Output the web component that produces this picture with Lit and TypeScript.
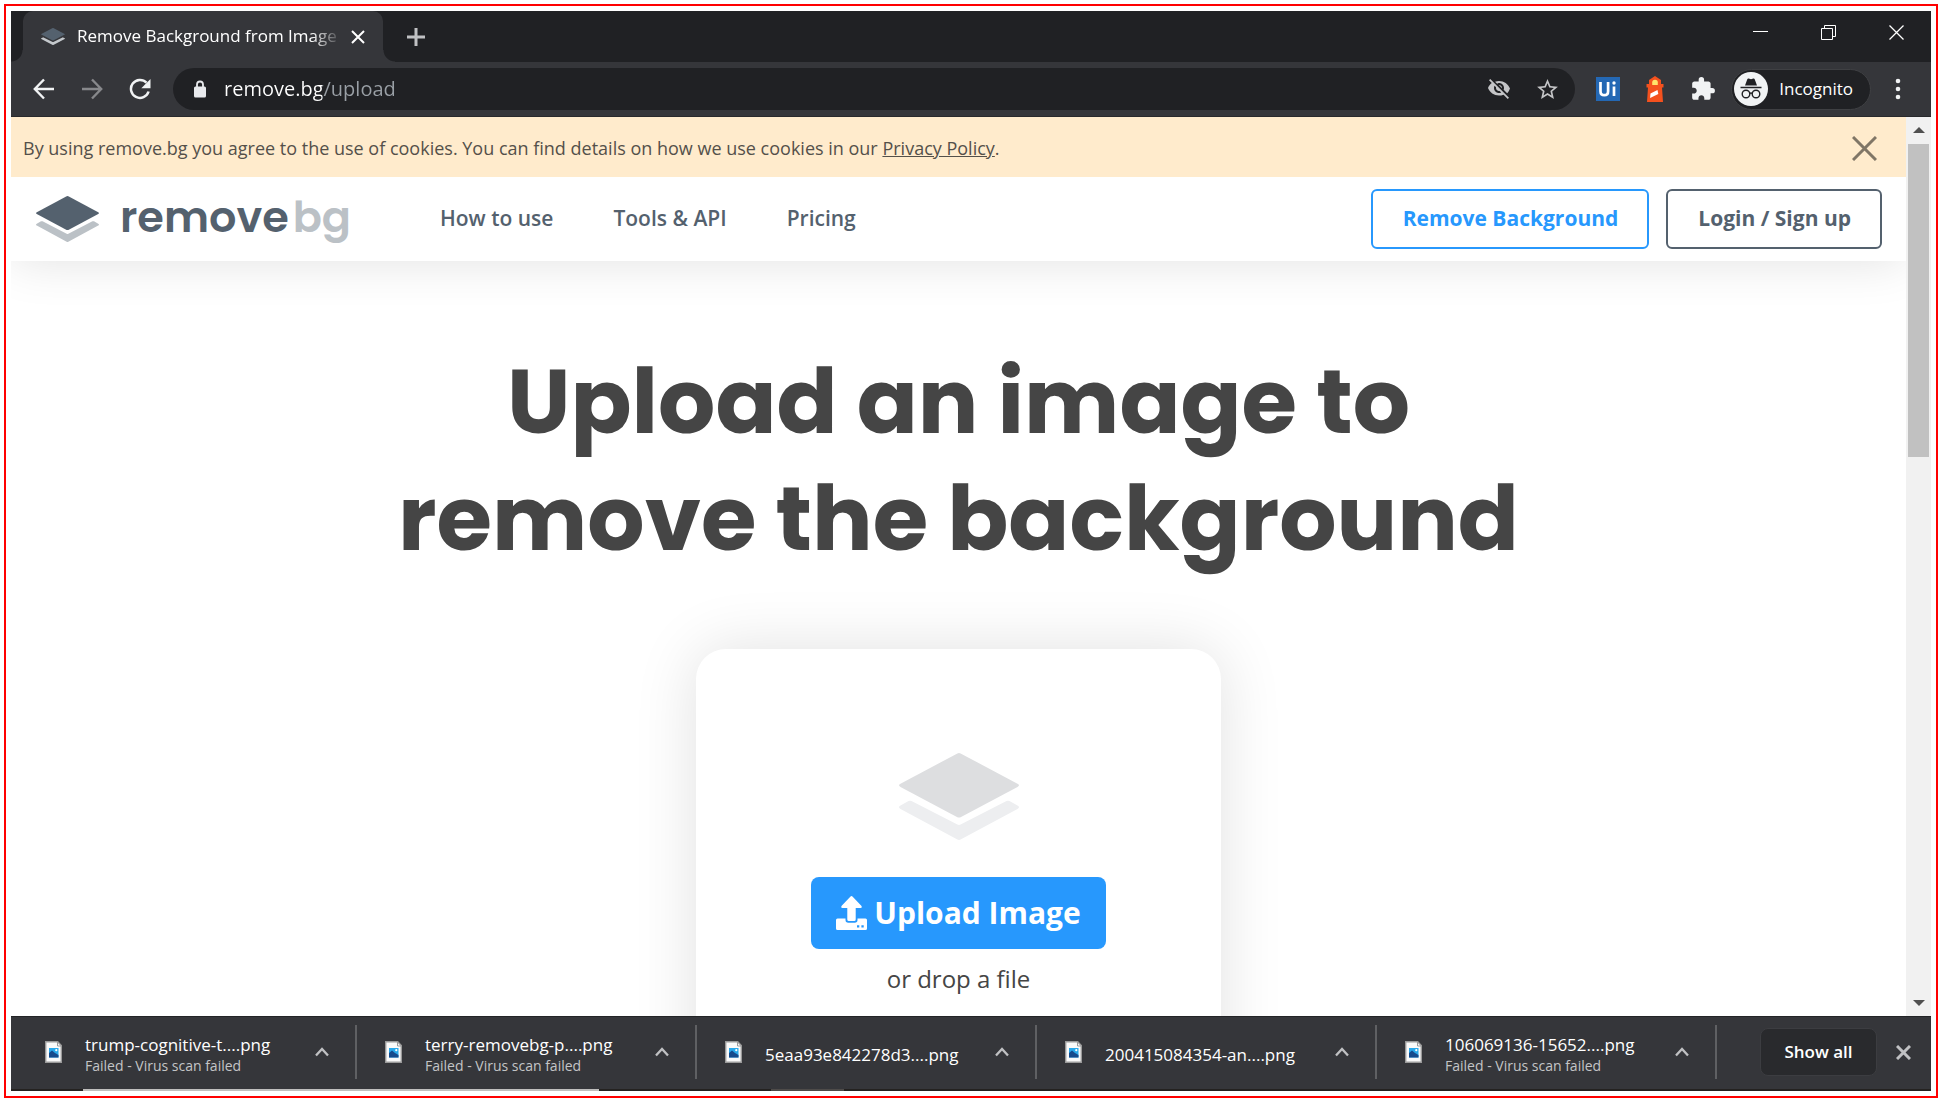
import { LitElement, html, svg, css, nothing } from "lit";
import { customElement, property } from "lit/decorators.js";

const layers = (top: string, bottom: string) => svg`
  <path fill=${top} d="M58.4 .5Q60 -.4 61.6 .5L118.5 34.2Q121.5 36 118.5 37.8L61.6 71.5Q60 72.4 58.4 71.5L1.5 37.8Q-1.500 36 1.500 34.200Z"/>
  <path fill=${bottom} d="M9.500 53.500Q11 52.700 12.500 53.500L58.400 79.800Q60 80.600 61.600 79.800L107.500 53.500Q109 52.700 110.500 53.500L118.500 58.600Q121.500 60.500 118.500 62.400L61.600 96.500Q60 97.400 58.400 96.500L1.500 62.400Q-1.500 60.500 1.500 58.600Z"/>`;

const crossIcon = (size: number, width: number) => html`
  <svg width=${size} height=${size} viewBox="0 0 ${size} ${size}" aria-hidden="true">
    <path d="M1 1L${size - 1} ${size - 1}M${size - 1} 1L1 ${size - 1}" fill="none" stroke="currentColor" stroke-width=${width}/>
  </svg>`;

const reset = css`
  *, *::before, *::after { box-sizing: border-box; }
  button { font: inherit; color: inherit; background: none; border: 0; padding: 0; margin: 0; display: flex; align-items: center; justify-content: center; cursor: pointer; }
  a { color: inherit; text-decoration: none; }
  svg { display: block; flex: none; }
`;

@customElement("browser-tabs")
class BrowserTabs extends LitElement {
  static styles = [reset, css`
    :host { display: flex; height: 51px; padding-left: 12px; background: #202124; color: #fff; font: 17px/24px "Segoe UI", "Open Sans", sans-serif; }
    .tab { position: relative; display: flex; align-items: center; width: 360px; padding: 0 18px; background: #35363a; border-radius: 10px 10px 0 0; }
    .tab::before, .tab::after { content: ""; position: absolute; bottom: 0; width: 12px; height: 12px; }
    .tab::before { right: 100%; background: radial-gradient(circle at 0 0, #202124 11px, #35363a 12px); }
    .tab::after { left: 100%; background: radial-gradient(circle at 100% 0, #202124 11px, #35363a 12px); }
    .title { flex: 1; margin: 0 14px 0 12px; padding-bottom: 2px; white-space: nowrap; overflow: hidden; mask-image: linear-gradient(to right, #000 90%, transparent 102%); }
    .new { margin-left: 24px; width: 18px; color: #c0c1c3; }
    .window { display: flex; align-items: center; gap: 53px; height: 43px; margin-left: auto; padding-right: 27px; }
  `];
  render() {
    return html`
      <div class="tab">
        <svg width="24" height="17" viewBox="0 0 120 97" preserveAspectRatio="none" aria-hidden="true">${layers("#54616e", "#c4c8cc")}</svg>
        <span class="title">Remove Background from Image</span>
        <button aria-label="Close tab">${crossIcon(14, 2)}</button>
      </div>
      <button class="new" aria-label="New tab">
        <svg width="18" height="18" viewBox="0 0 18 18"><path d="M9 0v18M0 9h18" stroke="currentColor" stroke-width="3"/></svg>
      </button>
      <div class="window">
        <button aria-label="Minimize"><svg width="15" height="15" viewBox="0 0 15 15"><path d="M0 6.500h15" stroke="#fff"/></svg></button>
        <button aria-label="Restore"><svg width="15" height="15" viewBox="0 0 15 15"><path d="M.5 3.500h11v11H.5zM3.500 3.500v-3h11v11h-3" fill="none" stroke="#fff"/></svg></button>
        <button aria-label="Close window"><svg width="15" height="15" viewBox="0 0 15 15"><path d="M.5.500l14 14M14.500.500l-14 14" stroke="#fff" stroke-width="1.300"/></svg></button>
      </div>`;
  }
}

@customElement("browser-toolbar")
class BrowserToolbar extends LitElement {
  static styles = [reset, css`
    :host { display: flex; align-items: center; height: 55px; padding: 0 26px 0 22px; background: #35363a; border-bottom: 1px solid #28292c; color: #f1f3f4; font: 17px/24px "Segoe UI", "Open Sans", sans-serif; }
    .nav { display: flex; gap: 26px; margin-right: 22px; }
    .omnibox { flex: 1; display: flex; align-items: center; height: 42px; padding: 0 15px 0 20px; border-radius: 21px; background: #202124; color: #c4c5c7; }
    .url { flex: 1; min-width: 0; margin: 0 17px; padding: 0; border: 0; outline: 0; color: #fff; font: 20px/28px "Segoe UI", "Open Sans", sans-serif; -webkit-text-fill-color: transparent; background: linear-gradient(to right, #fff 98px, #9aa0a6 98px); background-clip: text; -webkit-background-clip: text; }
    .marks { display: flex; gap: 24px; }
    .extensions { display: flex; align-items: center; margin-left: 21px; gap: 26px; }
    .incognito { height: 41px; margin: 0 20px 0 15px; padding: 0 17px 0 2px; gap: 11px; border: 1px solid #3f4043; border-radius: 21px; background: #202124; color: #fff; }
  `];
  render() {
    return html`
      <div class="nav">
        <button aria-label="Back"><svg width="22" height="22" viewBox="0 0 22 22"><path d="M21 11H2M11 1.500L1.800 11l9.200 9.500" fill="none" stroke="#f1f3f4" stroke-width="2.400"/></svg></button>
        <button aria-label="Forward"><svg width="22" height="22" viewBox="0 0 22 22"><path d="M1 11h19M11 1.500L20.200 11 11 20.500" fill="none" stroke="#87888b" stroke-width="2.400"/></svg></button>
        <button aria-label="Reload"><svg width="22" height="22" viewBox="0 0 22 22"><path d="M19.600 13.500A9 9 0 1 1 17.500 4.700" fill="none" stroke="#f1f3f4" stroke-width="2.500"/><path d="M21.500 1v9.200h-9.200z" fill="#f1f3f4"/></svg></button>
      </div>
      <div class="omnibox">
        <svg width="14" height="18" viewBox="0 0 14 18" aria-hidden="true"><path d="M4 8V4.500a3 3 0 0 1 6 0V8" fill="none" stroke="#e8eaed" stroke-width="1.800"/><rect x="1" y="6.500" width="12" height="11" rx="1.500" fill="#e8eaed"/></svg>
        <input class="url" type="text" aria-label="Address" .value=${"remove.bg/upload"}>
        <div class="marks">
          <button aria-label="Third-party cookies blocked"><svg width="24" height="24" viewBox="0 0 24 24"><path fill="currentColor" d="M12 6c2.760 0 5 2.240 5 5 0 .650-.130 1.260-.360 1.830l3.500 3.420c1.510-1.260 2.100-2.900 2.860-4.750-1.730-4.390-6-7.500-11-7.500-1.400 0-2.740.250-3.980.700l2.160 2.160C10.740 6.130 11.350 6 12 6zM2 3.270l2.280 2.280.460.460C3.080 7.300 1.780 9.020 1 11c1.730 4.390 6 7.500 11 7.500 1.550 0 3.030-.300 4.380-.840l.420.420L20.730 22 22 20.730 3.270 2 2 3.270zM7.530 8.800l1.550 1.550c-.050.210-.080.430-.080.650 0 1.660 1.340 3 3 3 .220 0 .440-.030.650-.080l1.550 1.550c-.670.330-1.410.530-2.200.530-2.760 0-5-2.240-5-5 0-.790.200-1.530.530-2.200zm4.310-.780l3.150 3.150.020-.160c0-1.660-1.340-3-3-3l-.170.010z"/></svg></button>
          <button aria-label="Bookmark this tab"><svg width="25" height="25" viewBox="0 0 24 24"><path fill="currentColor" d="M22 9.240l-7.190-.620L12 2 9.190 8.630 2 9.240l5.460 4.730L5.820 21 12 17.270 18.180 21l-1.630-7.030L22 9.240zM12 15.400l-3.760 2.270 1-4.280-3.320-2.880 4.380-.380L12 6.100l1.710 4.040 4.380.380-3.320 2.880 1 4.280L12 15.400z"/></svg></button>
        </div>
      </div>
      <div class="extensions">
        <button aria-label="UiPath extension"><svg width="24" height="24" viewBox="0 0 24 24"><rect width="24" height="24" fill="#2468b4"/><path d="M4.500 5v9.200q0 4 3.800 4t3.800-4V5M18 9.500v9.500" fill="none" stroke="#fff" stroke-width="2.700"/><circle cx="18" cy="6" r="1.700" fill="#fff"/></svg></button>
        <button aria-label="Lighthouse extension"><svg width="18" height="26" viewBox="0 0 18 26"><path fill="#f4511e" d="M9 0l6 4v4h2.500v3.500H16L17 26H1L2 11.500H.5V8H3V4z"/><path fill="#ffe36b" d="M6.200 9V6.500a2.800 2.800 0 0 1 5.600 0V9z"/><path fill="#fff" d="M4.500 17.500l7-3.500.8 4-8.200 4z"/></svg></button>
        <button aria-label="Extensions"><svg width="26" height="26" viewBox="0 0 24 24"><path fill="#f1f3f4" d="M20.500 11H19V7c0-1.100-.900-2-2-2h-4V3.500a2.500 2.500 0 0 0-5 0V5H4c-1.100 0-1.990.900-1.990 2v3.800H3.500c1.490 0 2.700 1.210 2.700 2.700s-1.210 2.700-2.700 2.700H2V20c0 1.100.900 2 2 2h3.800v-1.500c0-1.490 1.210-2.700 2.700-2.700s2.700 1.210 2.700 2.700V22H17c1.100 0 2-.900 2-2v-4h1.500a2.500 2.500 0 0 0 0-5z"/></svg></button>
      </div>
      <button class="incognito">
        <svg width="34" height="34" viewBox="0 0 34 34" aria-hidden="true"><circle cx="17" cy="17" r="17" fill="#f1f3f4"/><path fill="#202124" d="M11 13.500l2.300-6.200q.4-1 1.400-.7l2.300.6 2.300-.6q1-.3 1.400.7l2.300 6.200zM6.500 14.800h21v1.500h-21z"/><g fill="none" stroke="#202124" stroke-width="1.400"><circle cx="12" cy="22" r="3.800"/><circle cx="22" cy="22" r="3.800"/><path d="M15.800 21.500q1.200-1 2.400 0"/></g></svg>
        Incognito
      </button>
      <button aria-label="Menu"><svg width="14" height="22" viewBox="0 0 14 22" fill="#f1f3f4"><circle cx="7" cy="3" r="2.300"/><circle cx="7" cy="11" r="2.300"/><circle cx="7" cy="19" r="2.300"/></svg></button>`;
  }
}

@customElement("site-page")
class SitePage extends LitElement {
  static styles = [reset, css`
    :host { flex: 1; min-width: 0; overflow: hidden; background: #fff; color: #454545; font: 18px/28px "Open Sans", sans-serif; }
    .cookies { position: relative; display: flex; align-items: center; justify-content: space-between; height: 60px; padding: 2px 29px 0 12px; background: #ffebcc; color: #54504a; }
    .cookies p { margin: 0; }
    .cookies a { text-decoration: underline; }
    .cookies button { color: #807666; }
    .header { display: flex; align-items: center; height: 84px; padding: 0 24px; background: #fff; color: #54616e; font-size: 21px; font-weight: 600; box-shadow: 0 0 50px rgba(0, 0, 0, .12); }
    .brand { display: flex; align-items: center; gap: 21px; padding-left: 1px; font: 600 43px/44px Poppins, Inter, sans-serif; }
    .word { display: flex; gap: 4px; padding-bottom: 4px; }
    .word span:last-child { color: #bbc1c6; }
    .links { display: flex; gap: 60px; margin-left: 89px; padding-bottom: 2px; }
    .actions { display: flex; gap: 17px; margin-left: auto; font-weight: 700; }
    .actions a { padding: 13px 29px 15px 30px; line-height: 28px; border: 2px solid; border-radius: 6px; }
    .actions .primary { color: #2798fd; }
    .main { display: flex; flex-direction: column; align-items: center; padding-top: 82px; }
    h1 { max-width: 1200px; margin: 0 0 72px; text-align: center; font: 700 90px/117px Poppins, Inter, sans-serif; color: #454545; }
    .drop { display: flex; flex-direction: column; align-items: center; width: 525px; min-height: 480px; padding-top: 104px; border-radius: 30px; background: #fff; box-shadow: 0 0 64px rgba(0, 0, 0, .12); }
    .drop p { margin: 14px 0 0; font-size: 24px; line-height: 32px; }
    .upload { margin-top: 37px; height: 72px; padding: 0 25px; gap: 7px; border-radius: 8px; background: #2798fd; color: #fff; font-size: 30px; font-weight: 700; }
  `];
  render() {
    return html`
      <div class="cookies">
        <p>By using remove.bg you agree to the use of cookies. You can find details on how we use cookies in our <a href="#privacy">Privacy Policy</a>.</p>
        <button aria-label="Dismiss">${crossIcon(25, 3)}</button>
      </div>
      <header class="header">
        <a class="brand" href="#home">
          <svg width="63" height="46" viewBox="0 0 120 97" preserveAspectRatio="none" aria-hidden="true">${layers("#54616e", "#bbc1c6")}</svg>
          <span class="word"><span>remove</span><span>bg</span></span>
        </a>
        <nav class="links">
          <a href="#how">How to use</a><a href="#tools">Tools &amp; API</a><a href="#pricing">Pricing</a>
        </nav>
        <div class="actions">
          <a class="primary" href="#remove">Remove Background</a>
          <a href="#login">Login / Sign up</a>
        </div>
      </header>
      <main class="main">
        <h1>Upload an image to<br>remove the background</h1>
        <section class="drop">
          <svg width="120" height="87" viewBox="0 0 120 97" preserveAspectRatio="none" aria-hidden="true">${layers("#dddee0", "#edeef0")}</svg>
          <button class="upload">
            <svg width="31" height="34" viewBox="0 0 31 34" aria-hidden="true"><path fill="#fff" d="M14.300.7q1.200-1.200 2.400 0l8.600 9.100q1.300 1.900-.8 2.200h-4.800v11.500q0 1.500-1.500 1.500h-5.400q-1.500 0-1.500-1.500V12H6.500q-2.100-.3-.8-2.200z"/><path fill="#fff" fill-rule="evenodd" d="M1.500 22.500h8v1.500q0 2.800 2.800 2.800h6.400q2.800 0 2.800-2.800v-1.500h8q1.500 0 1.500 1.500v8.500q0 1.500-1.500 1.500h-28Q0 34 0 32.500V24q0-1.500 1.500-1.500zM21 29.200v2.300h2.300v-2.300zM25.400 29.200v2.300h2.300v-2.300z"/></svg>
            Upload Image
          </button>
          <p>or drop a file</p>
        </section>
      </main>`;
  }
}

@customElement("download-item")
class DownloadItem extends LitElement {
  @property() name = "";
  @property() status = "";
  static styles = [reset, css`
    :host { display: flex; align-items: center; flex: 0 1 340px; min-width: 0; height: 54px; padding: 0 26px 0 28px; border-right: 2px solid #5f6063; white-space: nowrap; }
    .text { flex: 1; display: flex; flex-direction: column; margin-left: 23px; padding-top: 6px; }
    .name { font-size: 17px; line-height: 22px; color: #fff; }
    .status { font-size: 14px; line-height: 20px; color: #c4c5c7; }
  `];
  render() {
    return html`
      <svg width="17" height="22" viewBox="0 0 17 22" aria-hidden="true"><path d="M.7.700h12L16.300 4.500v16.800H.7z" fill="#fafafa" stroke="#9a9a9a" stroke-width="1.400"/><path d="M12.500 1v4h4" fill="none" stroke="#9a9a9a"/><rect x="4" y="7" width="9.500" height="9.500" fill="#29a8ea"/><path d="M4 12l3-2.500 3 2.500 3.500 2v2.500H4z" fill="#174a8c"/><circle cx="11.300" cy="9.200" r="1.100" fill="#fff"/></svg>
      <span class="text">
        <span class="name">${this.name}</span>
        ${this.status ? html`<span class="status">${this.status}</span>` : nothing}
      </span>
      <button aria-label="Options for ${this.name}"><svg width="14" height="10" viewBox="0 0 14 10"><path d="M1 8.500l6-6.500 6 6.500" fill="none" stroke="#c0c1c3" stroke-width="2.300"/></svg></button>`;
  }
}

@customElement("download-shelf")
class DownloadShelf extends LitElement {
  static styles = [reset, css`
    :host { display: flex; flex-direction: column; background: #35363a; border-top: 1px solid #232426; color: #fff; font: 17px/24px "Segoe UI", "Open Sans", sans-serif; }
    .row { display: flex; align-items: center; height: 72px; padding: 0 20px 2px 6px; }
    .all { margin-left: auto; width: 117px; height: 48px; border: 1px solid #3c3d41; border-radius: 8px; background: #292a2d; font-weight: 600; }
    .close { margin-left: 19px; color: #c0c1c3; }
    .edge { display: flex; gap: 172px; height: 2px; padding-left: 72px; background: #242220; }
    .edge span:first-child { width: 516px; background: #c0bfbe; }
    .edge span:last-child { width: 73px; background: #4e4b49; }
  `];
  files = [
    ["trump-cognitive-t....png", "Failed - Virus scan failed"],
    ["terry-removebg-p....png", "Failed - Virus scan failed"],
    ["5eaa93e842278d3....png", ""],
    ["200415084354-an....png", ""],
    ["106069136-15652....png", "Failed - Virus scan failed"],
  ];
  render() {
    return html`
      <div class="row">
        ${this.files.map(([name, status]) => html`<download-item name=${name} status=${status}></download-item>`)}
        <button class="all">Show all</button>
        <button class="close" aria-label="Close downloads">${crossIcon(15, 3)}</button>
      </div>
      <div class="edge"><span></span><span></span></div>`;
  }
}

@customElement("app-root")
class AppRoot extends LitElement {
  static styles = [reset, css`
    :host { display: block; padding: 4px; background: #fff; }
    .frame { display: flex; flex-direction: column; height: calc(100vh - 8px); padding: 5px; border: 2px solid #f00; }
    .view { flex: 1; min-height: 0; display: flex; }
    .scroll { display: flex; flex-direction: column; align-items: center; width: 25px; padding: 10px 0; background: #f1f1f1; }
    .thumb { width: 21px; height: calc(35% + 5px); margin: 11px 0 auto; background: #c1c1c1; }
  `];
  render() {
    return html`
      <div class="frame">
        <browser-tabs></browser-tabs>
        <browser-toolbar></browser-toolbar>
        <div class="view">
          <site-page></site-page>
          <div class="scroll" aria-hidden="true">
            <svg width="12" height="6" viewBox="0 0 12 6"><path d="M0 6l6-6 6 6z" fill="#505050"/></svg>
            <div class="thumb"></div>
            <svg width="12" height="6" viewBox="0 0 12 6"><path d="M0 0h12L6 6z" fill="#505050"/></svg>
          </div>
        </div>
        <download-shelf></download-shelf>
      </div>`;
  }
}
